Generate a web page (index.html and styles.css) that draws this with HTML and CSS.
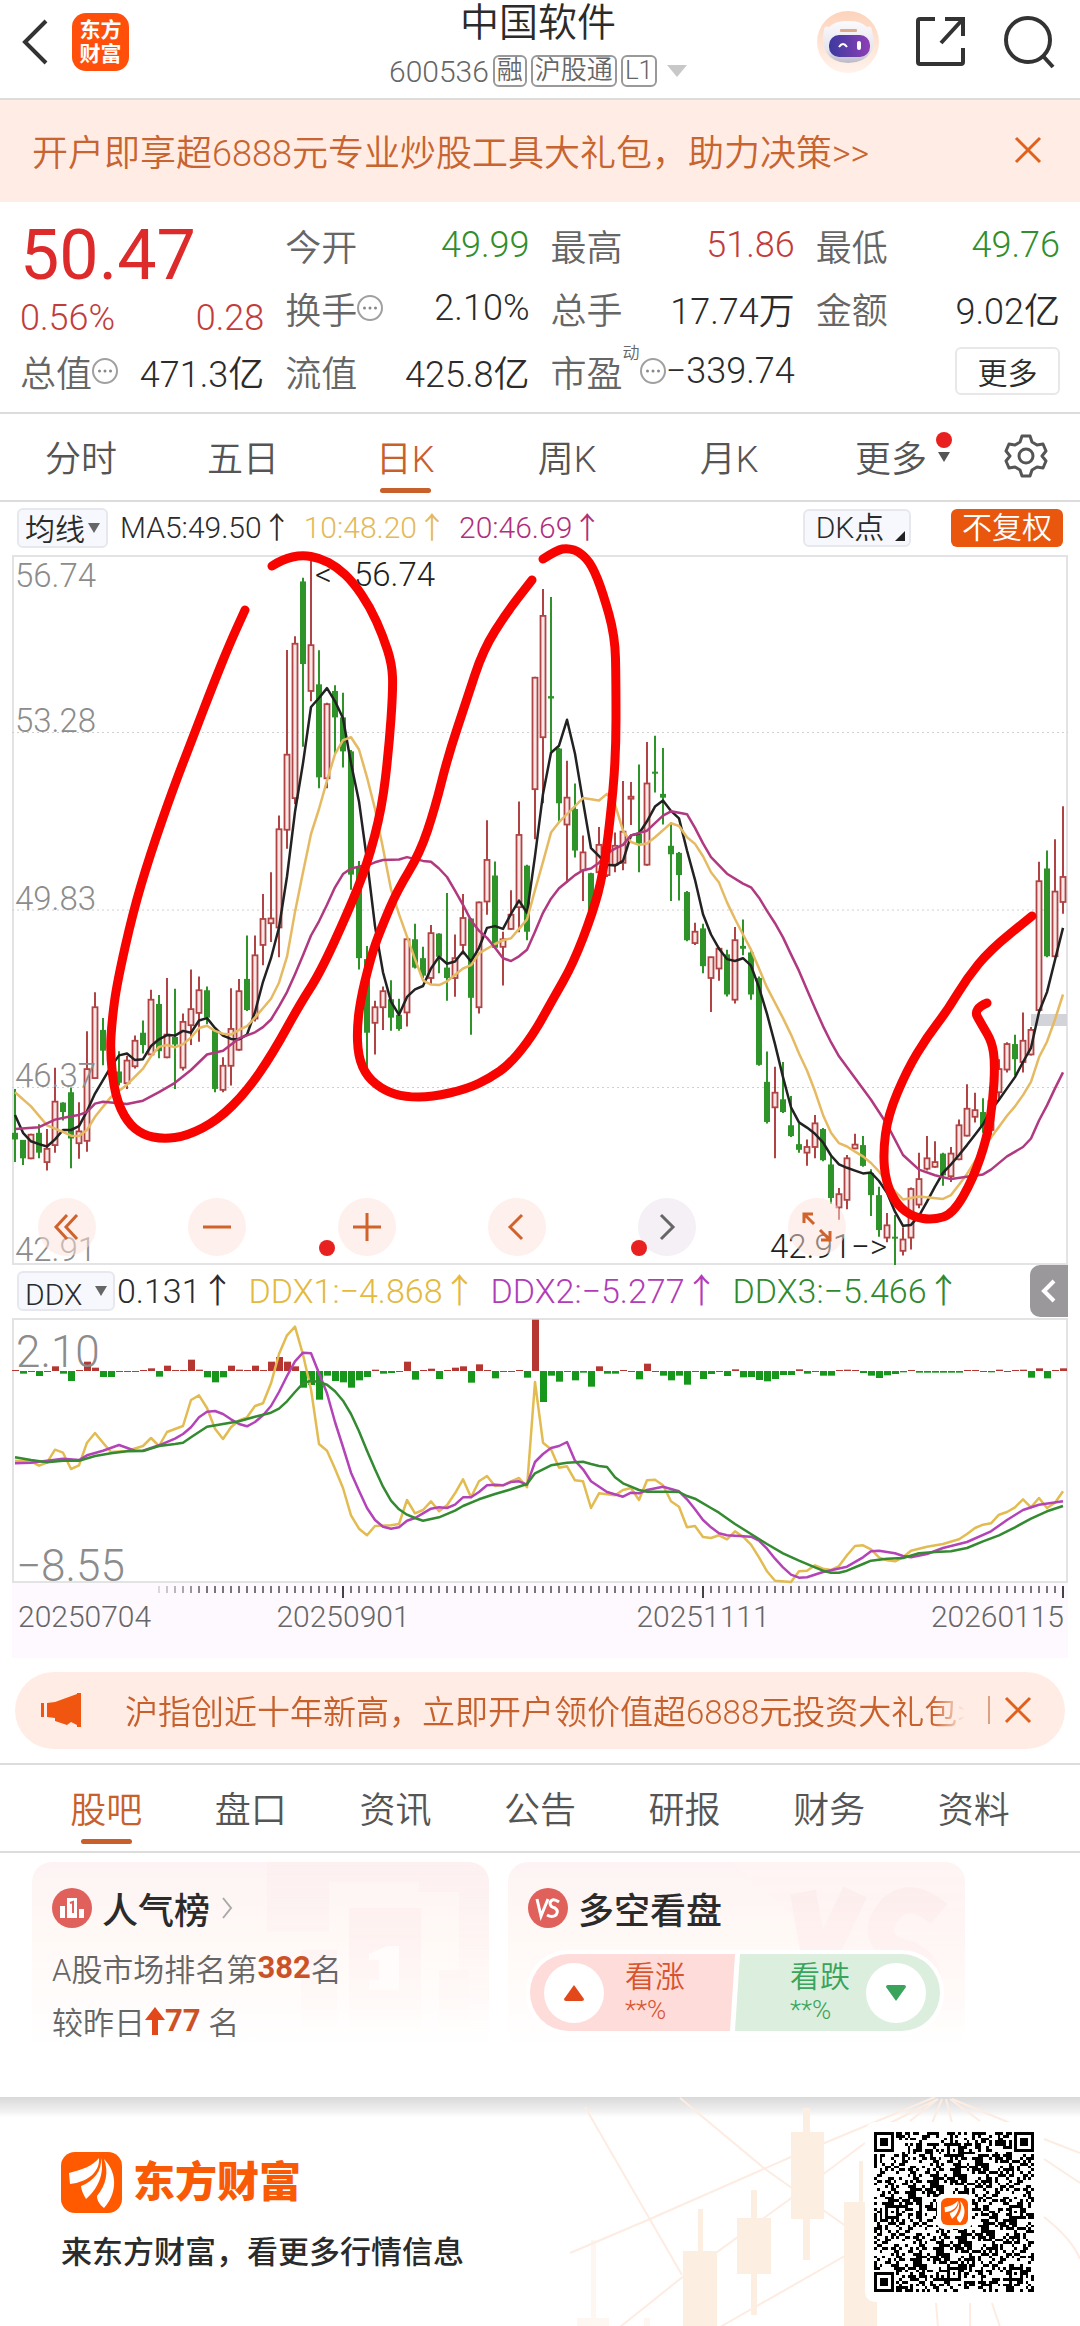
FILE: index.html
```html
<!DOCTYPE html>
<html lang="zh-CN">
<head>
    <meta charset="utf-8">
    <meta name="viewport" content="width=device-width, initial-scale=1">
    <title>中国软件 600536</title>
    <link rel="stylesheet" href="styles.css">
</head>
<body>
    <svg class="defs" width="0" height="0" aria-hidden="true">
        <symbol id="brand" viewBox="0 0 61 61">
            <rect width="61" height="61" rx="14" fill="#ff5a00"/>
            <path d="M8 21 C20 18 32 14 38 6 C39 20 27 30 9 32 Z" fill="#fff"/>
            <path d="M40 6 C44 22 36 38 25 47 C22 42 20 37 20 34 C33 29 41 19 40 6 Z" fill="#fff"/>
            <path d="M43 7 C58 22 55 43 43 56 C38 52 36 48 36 44 C45 33 48 20 43 7 Z" fill="#fff"/>
        </symbol>
        <symbol id="close" viewBox="0 0 28 28">
            <path d="M2 2 L26 26 M26 2 L2 26" fill="none" stroke="#e0601c" stroke-width="3"/>
        </symbol>
        <symbol id="dots" viewBox="0 0 26 26">
            <circle cx="13" cy="13" r="12" fill="none" stroke="#a0a0a0" stroke-width="2"/>
            <circle cx="7.500" cy="13" r="1.500" fill="#888"/>
            <circle cx="13" cy="13" r="1.500" fill="#888"/>
            <circle cx="18.500" cy="13" r="1.500" fill="#888"/>
        </symbol>
    </svg>

    <header class="topbar">
        <div class="topbar-side">
            <button class="icon-btn" aria-label="返回">
                <svg width="30" height="48" viewBox="0 0 30 48"><path d="M26 3 L5 24 L26 45" fill="none" stroke="#333" stroke-width="4"/></svg>
            </button>
            <a class="app-logo" href="#">东方<br>财富</a>
        </div>
        <div class="stock">
            <h1>中国软件</h1>
            <div class="stock-code">
                <span>600536</span>
                <span class="tag">融</span>
                <span class="tag">沪股通</span>
                <span class="tag">L1</span>
                <svg width="20" height="12" viewBox="0 0 20 12"><path d="M0 0 H20 L10 12 Z" fill="#c8c8c8"/></svg>
            </div>
        </div>
        <div class="topbar-side right">
            <button class="icon-btn" aria-label="智能助手">
                <svg width="64" height="64" viewBox="0 0 64 64">
                    <defs>
                        <linearGradient id="visor" x1="0" y1="0" x2="1" y2="0"><stop offset="0" stop-color="#3b3aa0"/><stop offset="1" stop-color="#8e3fb4"/></linearGradient>
                        <linearGradient id="halo" x1="0" y1="0" x2="0" y2="1"><stop offset="0" stop-color="#fdd3bb"/><stop offset="1" stop-color="#fff3ec"/></linearGradient>
                        <linearGradient id="shell" x1="0" y1="0" x2="0" y2="1"><stop offset="0" stop-color="#fbfafc"/><stop offset="0.700" stop-color="#e6e4ec"/><stop offset="1" stop-color="#b9b8c6"/></linearGradient>
                    </defs>
                    <circle cx="32" cy="32" r="31" fill="url(#halo)"/>
                    <path d="M8 20 Q8 15 13 17 Q20 10 32 11 Q44 10 51 17 Q56 15 56 21 Q60 34 55 42 Q48 53 32 53 Q17 53 10 42 Q5 32 8 20 Z" fill="url(#shell)"/>
                    <rect x="24" y="19" width="17" height="3" rx="1" fill="#dfa98c"/>
                    <rect x="13" y="25" width="41" height="22" rx="10" fill="url(#visor)"/>
                    <path d="M23 37 Q27 31 31 37" fill="none" stroke="#fff" stroke-width="2"/>
                    <rect x="41" y="31" width="4" height="9" rx="2" fill="#fff"/>
                </svg>
            </button>
            <button class="icon-btn" aria-label="分享">
                <svg width="52" height="52" viewBox="0 0 52 52" fill="none" stroke="#333" stroke-width="4"><path d="M20 3 H5 Q3 3 3 5 V46 Q3 48 5 48 H46 Q48 48 48 46 V32 M30 3 H48 V20 M48 3 L26 27"/></svg>
            </button>
            <button class="icon-btn" aria-label="搜索">
                <svg width="54" height="54" viewBox="0 0 54 54" fill="none" stroke="#333" stroke-width="4"><circle cx="26" cy="25" r="22"/><path d="M41 41 L51 52"/></svg>
            </button>
        </div>
    </header>

    <aside class="banner">
        <a href="#">开户即享超6888元专业炒股工具大礼包，助力决策&gt;&gt;</a>
        <button class="icon-btn" aria-label="关闭"><svg width="28" height="28"><use href="#close"/></svg></button>
    </aside>

    <section class="quote">
        <div class="price">
            <strong>50.47</strong>
            <div class="item up"><span>0.56%</span><span>0.28</span></div>
        </div>
        <div class="item"><span>今开</span><b class="down">49.99</b></div>
        <div class="item"><span>最高</span><b class="up">51.86</b></div>
        <div class="item"><span>最低</span><b class="down">49.76</b></div>
        <div class="item"><span>换手<svg width="26" height="26"><use href="#dots"/></svg></span><b>2.10%</b></div>
        <div class="item"><span>总手</span><b>17.74万</b></div>
        <div class="item"><span>金额</span><b>9.02亿</b></div>
        <div class="item"><span>总值<svg width="26" height="26"><use href="#dots"/></svg></span><b>471.3亿</b></div>
        <div class="item"><span>流值</span><b>425.8亿</b></div>
        <div class="item"><span>市盈<sup>动</sup><svg width="26" height="26"><use href="#dots"/></svg></span><b>−339.74</b></div>
        <div class="item end"><button class="more">更多</button></div>
    </section>

    <nav class="tabs period">
        <button>分时</button>
        <button>五日</button>
        <button class="active">日K</button>
        <button>周K</button>
        <button>月K</button>
        <button class="has-dot">更多<i class="dot"></i><i class="caret"></i></button>
        <button class="gear" aria-label="设置">
            <svg width="44" height="44" viewBox="0 0 44 44" fill="none" stroke="#555" stroke-width="3" stroke-linejoin="round">
                <path d="M18 2 H26 L28 8 L33 11 L39 10 L42 17 L38 22 L42 27 L39 34 L33 33 L28 36 L26 42 H18 L16 36 L11 33 L5 34 L2 27 L6 22 L2 17 L5 10 L11 11 L16 8 Z"/>
                <circle cx="22" cy="22" r="7"/>
            </svg>
        </button>
    </nav>

    <div class="ma-row">
        <span class="picker"><select aria-label="主图指标"><option>均线</option></select></span>
        <span>MA5:49.50↑</span>
        <span class="ma10">10:48.20↑</span>
        <span class="ma20">20:46.69↑</span>
        <button class="chip dk">DK点</button>
        <button class="chip adjust">不复权</button>
    </div>

    <div class="chart">
        <svg id="kline" viewBox="0 0 1056 710"></svg>
        <div class="chart-tools">
            <button aria-label="最左"><svg width="28" height="28" viewBox="0 0 28 28"><path d="M14 2 L3 14 L14 26 M24 2 L13 14 L24 26"/></svg></button>
            <button aria-label="缩小"><svg width="28" height="28" viewBox="0 0 28 28"><path d="M0 14 H28"/></svg></button>
            <button aria-label="放大"><svg width="28" height="28" viewBox="0 0 28 28"><path d="M0 14 H28 M14 0 V28"/></svg></button>
            <button aria-label="左移" class="has-dot"><i class="dot"></i><svg width="28" height="28" viewBox="0 0 28 28"><path d="M19 2 L7 14 L19 26"/></svg></button>
            <button aria-label="右移" class="has-dot muted"><i class="dot"></i><svg width="28" height="28" viewBox="0 0 28 28"><path d="M8 2 L20 14 L8 26"/></svg></button>
            <button aria-label="全屏"><svg width="30" height="30" viewBox="0 0 30 30"><path d="M2 11 V2 H11 M2 2 L12 12 M28 19 V28 H19 M28 28 L18 18"/></svg></button>
        </div>
    </div>

    <div class="ddx-row">
        <span class="picker"><select aria-label="副图指标"><option>DDX</option></select></span>
        <span>0.131↑</span>
        <span class="ddx1">DDX1:−4.868↑</span>
        <span class="ddx2">DDX2:−5.277↑</span>
        <span class="ddx3">DDX3:−5.466↑</span>
        <button class="fold" aria-label="展开"><svg width="18" height="26" viewBox="0 0 18 26"><path d="M14 3 L4 13 L14 23" fill="none" stroke="#fff" stroke-width="4"/></svg></button>
    </div>

    <div class="chart sub">
        <svg id="ddx" viewBox="0 0 1056 339"></svg>
    </div>

    <aside class="news">
        <svg width="40" height="34" viewBox="0 0 40 34" fill="#f0560f"><path d="M0 10 H3 V24 H0 Z M6 10 L14 9 L36 1 V0 H40 V34 H36 V32 L30 29 L26 32 L14 28 V25 L6 24 Z"/></svg>
        <a href="#">沪指创近十年新高，立即开户领价值超6888元投资大礼包&gt;</a>
        <button class="icon-btn" aria-label="关闭"><svg width="28" height="28"><use href="#close"/></svg></button>
    </aside>

    <nav class="tabs info">
        <button class="active">股吧</button>
        <button>盘口</button>
        <button>资讯</button>
        <button>公告</button>
        <button>研报</button>
        <button>财务</button>
        <button>资料</button>
    </nav>

    <section class="cards">
        <article class="card rank">
            <svg class="card-art" width="240" height="172" viewBox="0 0 240 172" fill="#fdeeee">
                <path d="M18 0 H240 V172 H210 V30 H170 V20 H80 V70 H18 Z" opacity="0.600"/>
                <path d="M100 46 H172 V172 H100 Z M52 88 H88 V172 H52 Z M190 108 H220 V172 H190 Z"/>
                <path d="M120 92 L138 84 H150 V128 H120 V118 H130 V98 H120 Z" fill="#fff"/>
            </svg>
            <h2>
                <svg width="40" height="40" viewBox="0 0 40 40"><circle cx="20" cy="20" r="20" fill="#e0605b"/><path d="M15 10 H25 V30 H15 Z M8 18 H13 V30 H8 Z M27 21 H32 V30 H27 Z" fill="#fff"/><path d="M18 15 L21 14 V25" fill="none" stroke="#e0605b" stroke-width="2"/></svg>
                人气榜
                <svg width="14" height="22" viewBox="0 0 14 22"><path d="M3 1 L11 11 L3 21" fill="none" stroke="#aaa" stroke-width="2"/></svg>
            </h2>
            <p>A股市场排名第<b>382</b>名</p>
            <p>较昨日<svg width="20" height="28" viewBox="0 0 20 28"><path d="M10 0 L20 13 H13 V28 H7 V13 H0 Z" fill="#e2481a"/></svg><b>77</b>&nbsp;名</p>
        </article>
        <article class="card">
            <svg class="card-art" width="240" height="172" viewBox="0 0 240 172" fill="none" stroke="#fdecec" stroke-width="26">
                <path d="M6 0 H240 V172 H210 Z" fill="#fef4f3" stroke="none"/>
                <path d="M78 30 L92 110 L130 30 M214 52 Q178 22 158 58 Q148 84 184 92 Q214 104 200 150"/>
            </svg>
            <h2>
                <svg width="40" height="40" viewBox="0 0 40 40"><circle cx="20" cy="20" r="20" fill="#e0605b"/><path d="M9 11 L13 28 L20 11 M31 14 Q24 9 22 15 Q22 19 27 20 Q31 23 28 27 Q24 30 19 27" fill="none" stroke="#fff" stroke-width="3"/></svg>
                多空看盘
            </h2>
            <div class="vote">
                <button class="vote-up">
                    <i><svg width="20" height="16" viewBox="0 0 20 16"><path d="M10 0 L20 14 Q20 16 18 16 H2 Q0 16 0 14 Z" fill="#e2481a"/></svg></i>
                    <span>看涨<small>**%</small></span>
                </button>
                <button class="vote-down">
                    <span>看跌<small>**%</small></span>
                    <i><svg width="20" height="16" viewBox="0 0 20 16"><path d="M10 16 L0 2 Q0 0 2 0 H18 Q20 0 20 2 Z" fill="#38a45c"/></svg></i>
                </button>
            </div>
        </article>
    </section>

    <footer class="promo">
        <svg class="promo-art" width="520" height="230" viewBox="0 0 520 230">
            <g fill="none" stroke="#fdece2" stroke-width="2">
                <path d="M10 156 L90 122 L231 60 L375 0 M120 1 L205 72 L290 132 M25 10 L122 178 M60 230 L120 182 L230 102 L305 46 M160 230 L290 156 M378 2 L330 26 M378 2 L350 24 M382 2 L372 26 M386 2 L392 26 M390 2 L420 24 M392 2 L450 26 M484 42 L520 56 M484 62 L520 86 M484 120 Q512 142 520 162 M376 206 L378 230 M410 206 V230 M432 206 L440 230"/>
            </g>
            <g fill="#fdeee2">
                <path d="M243 11 H250 V35 H264 V122 H250 V163 H243 V122 H231 V35 H243 Z"/>
                <path d="M191 93 H197 V121 H211 V177 H197 V218 H191 V177 H177 V121 H191 Z"/>
                <path d="M138 112 H143 V154 H157 V230 H123 V154 H138 Z"/>
                <path d="M299 64 H303 V105 H317 V230 H284 V105 H299 Z"/>
                <path d="M31 143 H36 V221 H49 V230 H17 V221 H31 Z M84 221 H90 V230 H84 Z" opacity="0.500"/>
            </g>
        </svg>
        <div class="promo-text">
            <div class="promo-name"><svg width="61" height="61"><use href="#brand"/></svg>东方财富</div>
            <p>来东方财富，看更多行情信息</p>
        </div>
        <div class="qr"><svg id="qr" viewBox="0 0 57 57" shape-rendering="crispEdges"></svg><svg class="qr-logo" width="27" height="27"><use href="#brand"/></svg></div>
    </footer>

    <script src="script.js"></script>
</body>
</html>
```
FILE: styles.css
```css
* {
    box-sizing: border-box;
}

body {
    margin: 0;
    background: #fff;
    color: #2b2b2b;
    font-family: Roboto, "Noto Sans CJK SC", sans-serif;
    font-weight: 350;
    font-size: 36px;
}

button, select {
    font: inherit;
    color: inherit;
    background: none;
    border: 0;
    padding: 0;
    margin: 0;
}

a {
    color: inherit;
    text-decoration: none;
}

svg {
    display: block;
    flex: none;
}

h1, h2, p {
    margin: 0;
}

.defs {
    position: absolute;
}

.icon-btn {
    display: flex;
}

/* header */
.topbar {
    display: flex;
    height: 100px;
    padding: 0 24px 0 20px;
    border-bottom: 2px solid #dcdcdc;
}

.topbar-side {
    flex: 1;
    display: flex;
    align-items: center;
    gap: 22px;
    padding-bottom: 14px;
}

.topbar-side.right {
    justify-content: flex-end;
    gap: 35px;
}

.app-logo {
    width: 57px;
    height: 58px;
    padding-top: 5px;
    border-radius: 14px;
    background: #ff4f0a;
    color: #fff;
    font-size: 21px;
    font-weight: 700;
    line-height: 24px;
    text-align: center;
}

.stock {
    display: flex;
    flex-direction: column;
    align-items: center;
}

.stock h1 {
    font-size: 39px;
    font-weight: 350;
    line-height: 46px;
}

.stock-code {
    display: flex;
    align-items: center;
    gap: 4px;
    height: 50px;
    color: #666;
    font-size: 30px;
}

.stock-code svg {
    margin-left: 6px;
}

.tag {
    height: 32px;
    padding: 0 2px;
    border: 2px solid #999;
    border-radius: 6px;
    font-size: 26px;
    line-height: 27px;
}

/* promotion */
.banner {
    display: flex;
    align-items: center;
    justify-content: space-between;
    height: 102px;
    padding: 0 38px 2px 32px;
    background: #ffede5;
    color: #c8642f;
}

/* quote */
.quote {
    display: grid;
    grid-template-columns: repeat(4, 1fr);
    grid-auto-rows: 63px;
    column-gap: 21px;
    padding: 11px 20px 10px;
    border-bottom: 2px solid #dcdcdc;
}

.price {
    grid-row: span 2;
}

.price strong {
    display: block;
    height: 84px;
    color: #dd2a2a;
    font-size: 70px;
    font-weight: 400;
    line-height: 84px;
}

.item {
    display: flex;
    align-items: center;
    justify-content: space-between;
    white-space: nowrap;
}

.item > span:first-child {
    display: flex;
    align-items: center;
    color: #666;
}

.item b {
    font-weight: 350;
}

.item sup {
    align-self: flex-start;
    font-size: 17px;
    line-height: 17px;
}

.item.end {
    justify-content: flex-end;
}

.item .up, .up.item, .item.up > span:first-child {
    color: #c23c3c;
}

.item .down {
    color: #2f8f2f;
}

.more {
    width: 105px;
    height: 48px;
    border: 2px solid #e8e8ea;
    border-radius: 6px;
    font-size: 30px;
}

/* tabs */
.tabs {
    display: flex;
    height: 88px;
    border-bottom: 2px solid #dcdcdc;
    color: #555;
}

.tabs button {
    flex: 1;
    position: relative;
    padding-bottom: 2px;
}

.tabs .gear {
    flex: 0 0 108px;
    display: flex;
    align-items: center;
    justify-content: center;
}

.tabs .active {
    color: #c8602c;
}

.tabs .active::after {
    content: "";
    position: absolute;
    left: calc(50% - 25px);
    bottom: 7px;
    width: 51px;
    height: 5px;
    border-radius: 3px;
    background: #c8602c;
}

.dot {
    position: absolute;
    width: 16px;
    height: 16px;
    border-radius: 50%;
    background: #e82020;
}

.period .dot {
    right: 20px;
    top: 18px;
}

.period .caret {
    position: absolute;
    right: 22px;
    top: 38px;
    border: 6px solid transparent;
    border-top: 10px solid #555;
    border-bottom: 0;
}

/* indicator rows */
.ma-row, .ddx-row {
    display: flex;
    align-items: center;
    margin: 0 12px;
    white-space: nowrap;
}

.ma-row {
    gap: 12px;
    height: 53px;
    padding: 0 5px 2px;
    font-size: 30px;
    line-height: 40px;
}

.picker {
    position: relative;
    display: flex;
}

.picker::after {
    content: "";
    position: absolute;
    right: 8px;
    top: 15px;
    border: 6px solid transparent;
    border-top: 10px solid #666;
    border-bottom: 0;
}

.picker select {
    appearance: none;
    width: 91px;
    height: 40px;
    padding-left: 6px;
    border: 2px solid #e6e8ee;
    border-radius: 6px;
    background: #f6f8fd;
    font-size: 30px;
}

.ma10 {
    color: #e3b95a;
}

.ma20 {
    color: #b0307e;
}

.chip {
    height: 38px;
    border-radius: 6px;
    font-size: 30px;
    line-height: 34px;
}

.dk {
    position: relative;
    width: 108px;
    margin-left: auto;
    padding-right: 14px;
    border: 2px solid #e6e8ee;
    background: #f6f8fd;
}

.dk::after {
    content: "";
    position: absolute;
    right: 4px;
    bottom: 4px;
    border-left: 10px solid transparent;
    border-bottom: 10px solid #222;
}

.adjust {
    width: 112px;
    margin-left: 28px;
    background: #e9570f;
    color: #fff;
}

.ddx-row {
    gap: 14px;
    height: 54px;
    padding: 0 0 2px 5px;
    font-size: 34px;
    line-height: 44px;
}

.ddx-row .picker {
    margin-right: -12px;
}

.ddx-row select {
    width: 98px;
}

.ddx1 {
    color: #e3b940;
}

.ddx2 {
    color: #b03cb8;
}

.ddx3 {
    color: #2f8a2f;
}

.fold {
    display: flex;
    align-items: center;
    justify-content: center;
    width: 38px;
    height: 52px;
    margin-left: auto;
    border-radius: 10px 0 0 10px;
    background: #9b989c;
}

/* charts */
.chart {
    position: relative;
    margin: 0 12px;
}

.chart > svg {
    width: 100%;
    height: auto;
    overflow: visible;
}

.chart.sub {
    background: linear-gradient(#fff 264px, #fdf9fe 264px);
}

.chart-tools {
    position: absolute;
    left: 26px;
    bottom: 9px;
    display: flex;
    gap: 92px;
}

.chart-tools button {
    position: relative;
    display: flex;
    align-items: center;
    justify-content: center;
    width: 58px;
    height: 58px;
    border-radius: 50%;
    background: rgba(253, 226, 217, 0.5);
}

.chart-tools .muted {
    background: #f4f0f6;
}

.chart-tools path {
    fill: none;
    stroke: #d0622c;
    stroke-width: 3;
}

.chart-tools .muted path {
    stroke: #666;
}

.chart-tools .dot {
    left: -7px;
    bottom: 0;
}

.chart-tools .has-dot:not(.muted) .dot {
    left: -169px;
}

.grid {
    stroke: #d0d0d0;
    stroke-dasharray: 2 3;
}

.frame {
    fill: none;
    stroke: #e3e3e5;
    stroke-width: 2;
}

.axis {
    fill: #8c8c8c;
    font-size: 33px;
}

.axis.big {
    font-size: 44px;
}

.mark {
    fill: #222;
    font-size: 33px;
}

.date {
    fill: #666;
    font-size: 30px;
}

.line {
    fill: none;
    stroke-width: 2.5;
    stroke-linejoin: round;
}

.ring {
    fill: none;
    stroke: #f80400;
    stroke-width: 9;
    stroke-linecap: round;
    stroke-linejoin: round;
}

/* news strip */
.news {
    display: flex;
    align-items: center;
    gap: 24px;
    height: 77px;
    margin: 14px 15px;
    padding: 0 33px 2px 26px;
    border-radius: 39px;
    background: #ffede5;
    color: #c8602c;
    font-size: 33px;
}

.news a {
    flex: 1;
    margin-left: 20px;
    overflow: hidden;
    white-space: nowrap;
    -webkit-mask-image: linear-gradient(to right, #000 95%, transparent 99%);
    mask-image: linear-gradient(to right, #000 95%, transparent 99%);
}

.news .icon-btn {
    padding-left: 14px;
    margin-left: -10px;
    border-left: 2px solid #dba183;
}

.info {
    height: 90px;
    padding: 0 34px;
    border-top: 2px solid #dcdcdc;
}

/* cards */
.cards {
    display: grid;
    grid-template-columns: 457px 457px;
    gap: 19px;
    height: 244px;
    padding: 9px 32px 0;
}

.card {
    position: relative;
    height: 184px;
    padding: 26px 20px 0;
    border-radius: 20px 20px 0 0;
    background: linear-gradient(#fdf3f4, #fff9f6 40%, #fff);
}

.card-art {
    position: absolute;
    right: 0;
    top: 0;
    border-radius: 0 20px 0 0;
    -webkit-mask-image: linear-gradient(#000, transparent);
    mask-image: linear-gradient(#000, transparent);
}

.card h2 {
    position: relative;
    display: flex;
    align-items: center;
    gap: 10px;
    height: 40px;
    font-size: 36px;
    font-weight: 500;
}

.card p {
    position: relative;
    display: flex;
    align-items: center;
    height: 53px;
    color: #666;
    font-size: 31px;
}

.card h2 + p {
    margin-top: 13px;
}

.card b {
    color: #cc5226;
    font-weight: 700;
}

.vote {
    position: relative;
    display: flex;
    height: 77px;
    margin: 26px 5px 0 2px;
    border-radius: 39px;
    background: #fff;
    overflow: hidden;
    outline: 4px solid #fff;
}

.vote button {
    flex: 1;
    display: flex;
    align-items: center;
    gap: 21px;
    padding: 0 14px;
    text-align: left;
    font-size: 30px;
    line-height: 34px;
}

.vote i {
    display: flex;
    align-items: center;
    justify-content: center;
    width: 60px;
    height: 60px;
    border-radius: 50%;
    background: #fff;
}

.vote small {
    display: block;
    font-size: 26px;
    line-height: 32px;
}

.vote-up {
    background: #fedcd9;
    color: #d9532c;
    clip-path: polygon(0 0, 100% 0, calc(100% - 5px) 100%, 0 100%);
}

.vote-down {
    justify-content: flex-end;
    background: #dceedd;
    color: #38a45c;
    clip-path: polygon(5px 0, 100% 0, 100% 100%, 0 100%);
}

.vote .vote-down {
    gap: 16px;
}

/* footer */
.promo {
    position: relative;
    display: flex;
    align-items: center;
    justify-content: space-between;
    height: 230px;
    padding: 0 37px 0 61px;
    background: linear-gradient(#d9d9d9, #f0f0f0 14px, #fff 20px);
}

.promo-art {
    position: absolute;
    right: 0;
    top: 0;
}

.promo-text {
    font-size: 31px;
    font-weight: 500;
}

.promo-name {
    display: flex;
    align-items: center;
    gap: 11px;
    margin-bottom: 14px;
    color: #f95a05;
    font-size: 42px;
    font-weight: 900;
    line-height: 61px;
}

.qr {
    position: relative;
    width: 178px;
    height: 180px;
    padding: 10px 9px;
    border-radius: 10px;
    background: #fff;
}

.qr-logo {
    position: absolute;
    left: 76px;
    top: 76px;
    border: 4px solid #fff;
    border-radius: 6px;
    background: #fff;
    box-sizing: content-box;
    margin: -4px;
}
```
FILE: script.js
```js
var NS = "http://www.w3.org/2000/svg";
var RED = "#b04444";
var GREEN = "#2e9328";
var STEP = 8;

function add(parent, name, attrs, text) {
    var el = document.createElementNS(NS, name);
    for (var key in attrs) {
        el.setAttribute(key, attrs[key]);
    }
    if (text) {
        el.textContent = text;
    }
    parent.appendChild(el);
    return el;
}

function xOf(i) {
    return 3 + i * STEP;
}

// values are stored as a flat list: index, value, index, value...
function drawLine(svg, list, toY, color) {
    var pts = [];
    for (var i = 0; i < list.length; i += 2) {
        pts.push(xOf(list[i]) + "," + toY(list[i + 1]).toFixed(1));
    }
    add(svg, "polyline", { points: pts.join(" "), "class": "line", stroke: color });
}

// closed strokes drawn by hand, smoothed through the midpoints
function drawRing(svg, p) {
    var d = "M" + p[0] + " " + p[1];
    for (var i = 2; i < p.length - 2; i += 2) {
        d += " Q" + p[i] + " " + p[i + 1] + " " + (p[i] + p[i + 2]) / 2 + " " + (p[i + 1] + p[i + 3]) / 2;
    }
    d += " L" + p[p.length - 2] + " " + p[p.length - 1];
    add(svg, "path", { d: d, "class": "ring" });
}

/* ---------- daily candles ---------- */

// type, high, body top, body bottom, low
var candles = [
    "g",1165,1258,1272,1320, "g",1273,1273,1312,1326, "r",1260,1262,1312,1314, "g",1240,1258,1300,1312,
    "r",1250,1292,1320,1338, "r",1120,1192,1284,1300, "g",1193,1194,1214,1232, "g",1162,1172,1270,1333,
    "r",1193,1255,1280,1313, "r",1043,1123,1275,1298, "r",960,992,1142,1143, "g",1015,1040,1084,1115,
    "g",1085,1100,1130,1150, "g",1085,1128,1152,1158, "r",1095,1105,1153,1165, "r",1052,1063,1117,1122,
    "g",1020,1046,1072,1090, "r",955,976,1092,1092, "g",966,985,1085,1100, "r",930,1050,1098,1100,
    "g",953,1055,1071,1165, "r",1005,1023,1120,1126, "r",912,996,1030,1072, "r",927,956,1004,1065,
    "g",948,956,1014,1028, "g",1040,1040,1165,1172, "r",1098,1116,1167,1172, "r",952,1038,1116,1158,
    "r",932,958,1082,1084, "g",840,932,998,1000, "r",840,882,1016,1022, "r",752,805,860,903,
    "r",706,804,814,854, "r",586,615,823,886, "r",235,457,616,656, "r",206,222,549,562,
    "g",82,90,265,440, "r",40,225,322,344, "g",236,308,505,528, "r",347,350,507,528,
    "g",310,322,378,456, "g",326,378,450,484, "g",447,450,711,743, "g",682,695,888,912,
    "g",862,890,1046,1125, "r",978,992,1025,1092, "r",948,958,992,1040, "g",935,975,1014,1042,
    "g",974,1008,1038,1042, "r",842,848,1003,1033, "g",815,848,908,910, "g",864,888,925,930,
    "r",818,835,930,945, "g",835,836,885,920, "g",750,908,930,978, "r",838,888,930,970,
    "r",752,803,860,880, "g",803,804,972,1050, "r",768,770,992,1005, "r",596,680,768,796,
    "g",683,713,866,868, "r",832,848,864,946, "r",744,796,826,828, "r",556,627,780,833,
    "g",690,692,832,850, "r",292,294,530,636, "r",106,163,420,560, "g",123,333,338,450,
    "g",443,444,560,600, "r",470,548,605,728, "g",518,572,660,675, "r",628,664,702,767,
    "g",707,708,790,792, "r",610,648,706,740, "r",640,650,712,716, "r",622,650,690,706,
    "r",513,620,686,702, "r",515,546,550,606, "g",478,625,645,706, "r",430,518,690,692,
    "g",417,493,497,537, "g",443,540,548,605, "g",600,650,668,767, "g",663,665,712,766,
    "g",746,748,850,852, "r",813,832,856,860, "g",815,825,905,920, "r",885,886,930,1002,
    "r",865,868,910,936, "g",870,880,965,969, "r",822,850,976,984, "g",806,862,868,882,
    "g",870,876,965,976, "g",927,930,1114,1116, "g",1086,1150,1235,1238, "r",1118,1173,1204,1312,
    "g",1108,1187,1214,1216, "g",1180,1242,1265,1267, "g",1238,1282,1294,1300, "r",1272,1288,1300,1328,
    "r",1220,1238,1288,1312, "g",1248,1250,1316,1318, "g",1305,1325,1396,1408, "r",1375,1388,1416,1442,
    "r",1305,1312,1400,1420, "r",1260,1283,1291,1293, "g",1265,1284,1328,1330, "g",1335,1343,1390,1434,
    "g",1372,1390,1464,1478, "r",1428,1454,1480,1490, "g",1432,1478,1482,1538, "r",1458,1484,1508,1518,
    "r",1374,1377,1480,1505, "r",1300,1356,1410,1418, "r",1265,1312,1334,1338, "r",1276,1320,1330,1332,
    "g",1300,1302,1348,1370, "r",1288,1302,1350,1362, "r",1230,1242,1314,1316, "r",1155,1207,1264,1266,
    "r",1173,1210,1224,1236, "g",1185,1214,1245,1258, "r",1170,1190,1252,1270, "r",1102,1123,1172,1190,
    "r",1066,1070,1124,1130, "g",1050,1070,1102,1136, "r",1003,1063,1108,1130, "r",1034,1040,1092,1094,
    "r",684,725,998,1000, "g",660,698,884,886, "r",636,747,884,886, "r",566,716,769,794
];

var ma5 = [0,1220,1,1258,2,1276,3,1282,4,1287,5,1272,6,1252,7,1252,8,1244,9,1212,10,1175,12,1118,13,1094,14,1090,15,1104,16,1102,17,1074,18,1060,19,1051,20,1052,21,1042,22,1046,23,1020,24,1015,25,1036,26,1052,27,1059,28,1060,29,1050,30,1002,31,938,32,888,33,823,34,715,35,578,36,475,37,356,38,337,39,316,40,344,41,380,42,475,43,556,44,680,45,820,46,918,47,980,48,1008,49,970,50,954,51,947,52,910,53,885,54,900,55,895,56,874,57,895,58,866,59,824,60,820,61,826,62,794,63,766,64,792,65,672,66,540,67,453,68,438,69,383,70,455,71,556,72,655,73,672,74,690,75,692,76,682,77,628,78,624,79,598,80,567,81,554,82,576,83,592,84,660,85,722,86,795,87,838,88,868,89,890,90,894,91,888,92,904,93,950,94,1006,95,1070,96,1140,97,1204,98,1236,99,1247,100,1260,101,1278,102,1306,103,1325,104,1332,105,1338,106,1344,107,1342,108,1360,109,1385,110,1425,111,1455,112,1453,113,1434,114,1404,115,1372,116,1343,117,1325,118,1305,119,1284,120,1262,121,1240,122,1210,123,1188,124,1164,125,1140,126,1108,127,1078,128,1002,129,960,130,892,131,824];
var ma10 = [0,1172,2,1202,4,1242,6,1256,7,1264,8,1265,9,1252,10,1224,12,1182,14,1156,16,1122,17,1096,18,1076,19,1072,20,1077,21,1070,22,1056,23,1036,24,1031,25,1042,26,1048,27,1050,28,1040,29,1032,30,1014,32,974,33,940,34,885,35,790,36,706,37,625,38,572,39,512,40,456,41,426,42,420,43,446,44,505,45,572,46,655,47,742,48,795,50,890,51,935,52,944,53,945,54,937,56,910,57,903,58,878,60,858,61,850,62,846,63,826,64,806,65,744,66,684,67,622,68,600,70,566,71,549,73,554,74,540,75,562,76,618,77,642,78,648,79,645,80,632,82,602,83,608,84,632,85,646,86,672,87,706,88,728,89,770,90,805,91,838,92,870,93,910,94,950,96,1015,97,1050,98,1090,99,1126,100,1170,101,1220,102,1258,103,1280,104,1287,105,1298,106,1308,107,1322,108,1340,109,1362,110,1382,111,1399,113,1393,116,1398,117,1390,118,1368,119,1345,120,1318,121,1290,122,1268,123,1245,124,1222,125,1202,126,1178,127,1150,128,1098,129,1065,130,1018,131,965];
var ma20 = [0,1250,3,1246,5,1230,7,1223,8,1220,9,1214,10,1196,11,1192,14,1197,16,1190,18,1172,20,1152,22,1125,24,1092,26,1084,28,1058,30,1045,31,1034,32,1018,33,990,34,960,35,922,36,882,37,840,38,810,39,775,40,738,41,710,42,698,43,694,44,692,45,685,46,680,48,679,49,674,51,682,52,684,53,698,54,716,55,745,56,775,57,808,58,830,59,845,60,866,61,888,62,894,63,884,64,870,65,832,66,792,67,762,68,740,69,726,70,712,71,702,72,698,73,686,74,666,75,656,76,648,77,628,79,618,80,602,81,586,82,577,84,583,85,612,86,645,87,674,89,709,91,730,92,738,93,760,94,788,95,814,96,844,97,880,98,915,99,955,100,994,101,1032,102,1066,103,1096,105,1142,107,1188,109,1240,111,1305,113,1336,115,1348,117,1356,119,1351,121,1346,122,1336,124,1308,126,1288,127,1270,128,1232,129,1200,130,1164,131,1130];

var rings = [
    [260,11,271,4,290,0,308,3,325,12,341,27,358,52,371,81,380,109,381,135,377,192,370,253,355,310,336,357,308,418,288,449,261,498,235,536,206,565,175,581,151,584,131,580,115,567,103,541,98,498,100,465,105,428,121,357,138,300,161,234,181,182,201,130,218,88,233,55],
    [531,4,545,-5,556,-7,568,-3,580,10,591,38,603,81,604,126,604,201,598,267,591,319,581,357,561,409,541,444,521,480,498,509,478,523,455,534,420,542,393,542,373,536,355,522,346,501,345,470,350,437,361,395,371,369,385,336,408,298,423,253,436,201,455,144,471,95,495,57,520,25],
    [975,448,961,454,970,470,980,487,983,508,981,546,975,583,961,624,941,659,921,665,901,662,885,650,874,628,871,598,876,560,895,515,915,482,935,456,955,423,978,395,1020,361]
];

function drawKline() {
    var svg = document.getElementById("kline");
    function toY(v) {
        return (v - 34) * 710 / 1504;
    }

    add(svg, "rect", { x: 1, y: 1, width: 1054, height: 708, "class": "frame" });
    for (var g = 1; g < 4; g++) {
        add(svg, "line", { x1: 0, x2: 1056, y1: g * 177.5, y2: g * 177.5, "class": "grid" });
    }
    add(svg, "rect", { x: 1019, y: 459, width: 36, height: 12, fill: "#d3d3da" });

    for (var i = 0; i * 5 < candles.length; i++) {
        var c = candles.slice(i * 5, i * 5 + 5);
        var hollow = c[0] == "r";
        var color = hollow ? RED : GREEN;
        var top = toY(c[2]);
        var height = Math.max(toY(c[3]) - top, 2);
        add(svg, "line", { x1: xOf(i), x2: xOf(i), y1: toY(c[1]), y2: toY(c[4]), stroke: color, "stroke-width": 2 });
        add(svg, "rect", {
            x: xOf(i) - (hollow ? 2.5 : 3), y: top, width: hollow ? 5 : 6, height: height,
            fill: hollow ? "#fbe6e6" : color, stroke: color, "stroke-width": hollow ? 1.8 : 0
        });
    }

    drawLine(svg, ma5, toY, "#222");
    drawLine(svg, ma10, toY, "#e6ba62");
    drawLine(svg, ma20, toY, "#b0397f");

    add(svg, "text", { x: 3, y: 32, "class": "axis" }, "56.74");
    add(svg, "text", { x: 3, y: 177, "class": "axis" }, "53.28");
    add(svg, "text", { x: 3, y: 355, "class": "axis" }, "49.83");
    add(svg, "text", { x: 3, y: 532, "class": "axis" }, "46.37");
    add(svg, "text", { x: 3, y: 706, "class": "axis" }, "42.91");
    add(svg, "text", { x: 303, y: 31, "class": "mark" }, "<");
    add(svg, "text", { x: 342, y: 31, "class": "mark" }, "56.74");
    add(svg, "text", { x: 758, y: 703, "class": "mark" }, "42.91−>");

    for (var r = 0; r < rings.length; r++) {
        drawRing(svg, rings[r]);
    }
}

/* ---------- DDX ---------- */

var ddxBars = [1,-8,-2,-15,-2,14,-8,-30,1,28,10,-18,-18,-2,-2,-2,1,8,-17,16,1,1,34,4,-19,-34,-19,16,4,1,16,1,28,42,28,14,-50,-42,-86,-14,-30,-34,-50,-28,-18,4,-8,-6,-3,28,-26,1,7,-24,1,10,14,-35,20,1,-22,-2,-2,1,-20,154,-93,-14,-32,-2,-28,-5,-47,14,-8,-8,1,-2,-25,22,-3,-14,-28,-14,-41,-2,-24,-9,-2,-15,5,-19,-18,-27,-31,-24,-12,-12,5,-8,-2,-14,-14,2,4,2,-6,-14,-21,-13,-9,-4,1,-5,-5,-5,-5,-5,-5,1,1,-2,-4,4,-2,1,4,-20,8,-22,1,8];

var ddx1 = [0,606,2,608,3,621,4,612,5,573,6,582,7,631,8,620,9,552,10,523,11,552,12,580,14,577,16,562,17,538,18,562,19,520,21,502,22,424,23,410,24,448,25,510,26,541,27,506,28,485,29,476,30,442,31,434,32,374,33,286,34,230,35,204,36,288,37,392,38,556,39,576,40,630,41,688,42,770,43,810,44,830,45,802,47,800,48,796,49,724,50,764,51,754,52,728,53,758,54,740,55,704,56,662,57,716,58,668,59,652,60,682,61,680,62,668,63,658,64,686,65,370,66,552,67,572,68,627,69,623,70,665,71,668,72,748,73,704,75,710,76,694,77,688,78,724,79,665,80,663,81,680,82,728,83,744,84,806,85,802,86,835,87,838,88,830,89,842,90,818,91,834,92,858,93,896,94,938,95,966,97,970,98,938,99,936,100,920,101,930,102,934,103,922,104,890,105,862,106,860,107,872,108,896,109,905,110,908,111,896,112,876,114,864,116,856,118,842,119,826,120,808,121,798,122,794,123,768,124,760,125,746,126,722,127,746,128,718,129,748,130,732,131,698];
var ddx2 = [0,614,2,612,4,606,6,600,8,604,9,590,11,576,13,559,15,576,16,576,18,560,20,540,21,526,22,506,23,476,24,459,25,457,26,466,27,482,28,496,29,503,30,490,31,470,32,442,33,400,34,352,35,308,36,282,37,284,38,344,39,404,40,490,41,565,42,642,43,696,44,748,45,784,46,804,47,810,48,806,49,786,50,778,51,764,52,750,53,746,54,748,55,738,56,716,57,716,58,700,59,680,60,678,61,680,62,670,63,668,64,678,65,610,66,586,67,568,68,562,69,550,70,606,71,632,72,668,74,700,76,714,77,702,78,704,79,694,81,684,83,698,84,722,85,752,86,784,87,806,88,824,89,830,92,834,93,846,94,870,95,900,96,926,97,948,98,957,99,956,101,940,104,924,106,896,107,878,108,876,110,884,111,892,112,896,114,886,116,868,119,850,122,818,124,784,126,754,128,738,131,728];
var ddx3 = [0,596,2,604,4,611,6,606,8,606,10,592,12,584,14,578,16,577,18,562,20,556,21,552,22,536,24,504,26,496,28,488,30,474,32,462,33,450,34,428,35,400,36,374,37,366,38,370,39,378,40,398,41,426,42,466,43,518,44,576,45,632,46,684,47,726,48,752,49,768,50,778,51,786,53,776,55,756,56,742,58,722,60,706,62,692,64,676,65,644,67,620,69,612,71,609,72,616,73,622,74,625,75,656,76,674,77,684,78,694,79,699,82,699,83,700,84,712,85,720,87,748,88,762,90,796,92,826,94,856,96,884,98,906,100,926,101,936,102,942,103,942,104,936,106,916,107,906,109,900,111,898,113,884,115,880,117,878,119,868,121,848,123,830,125,806,127,780,129,758,131,742];

function drawDdx() {
    var svg = document.getElementById("ddx");
    function toY(v) {
        return (v - 181) / 3;
    }

    add(svg, "rect", { x: 1, y: 0, width: 1054, height: 263, "class": "frame" });
    for (var i = 0; i < ddxBars.length; i++) {
        var h = Math.max(Math.abs(ddxBars[i]) / 3, 1);
        var up = ddxBars[i] > 0;
        add(svg, "rect", { x: xOf(i) - 3, y: up ? 52 - h : 52, width: 7, height: h, fill: up ? "#b63632" : "#16961a" });
    }
    drawLine(svg, ddx1, toY, "#e2bc50");
    drawLine(svg, ddx2, toY, "#b443b8");
    drawLine(svg, ddx3, toY, "#338a30");

    add(svg, "text", { x: 4, y: 48, "class": "axis big" }, "2.10");
    add(svg, "text", { x: 4, y: 262, "class": "axis big" }, "−8.55");

    for (var t = 18; t < 132; t++) {
        var major = t == 41 || t == 86 || t == 131;
        add(svg, "line", {
            x1: xOf(t), x2: xOf(t), y1: 267, y2: major ? 279 : 274,
            stroke: major ? "#444" : "#777", "stroke-width": 2, opacity: Math.min((t - 16) / 8, 1)
        });
    }
    add(svg, "text", { x: 6, y: 308, "class": "date" }, "20250704");
    add(svg, "text", { x: xOf(41), y: 308, "class": "date", "text-anchor": "middle" }, "20250901");
    add(svg, "text", { x: xOf(86), y: 308, "class": "date", "text-anchor": "middle" }, "20251111");
    add(svg, "text", { x: 1052, y: 308, "class": "date", "text-anchor": "end" }, "20260115");
}

/* ---------- QR code ---------- */

function drawQr() {
    var svg = document.getElementById("qr");
    var n = 57;
    var seed = 600536;
    var d = "";

    // square marks: centre x, centre y, radius
    var marks = [[3, 3, 3], [53, 3, 3], [3, 53, 3], [28, 6, 2], [6, 28, 2], [50, 28, 2], [28, 50, 2], [50, 50, 2]];

    function cell(x, y) {
        for (var m = 0; m < marks.length; m++) {
            var dist = Math.max(Math.abs(x - marks[m][0]), Math.abs(y - marks[m][1]));
            if (marks[m][2] == 3 && dist <= 4) {
                return dist == 3 || dist < 2;
            }
            if (marks[m][2] == 2 && dist <= 2) {
                return dist != 1;
            }
        }
        seed = (seed * 1103515245 + 12345) % 2147483648;
        return seed / 2147483648 < 0.5;
    }

    for (var y = 0; y < n; y++) {
        for (var x = 0; x < n; x++) {
            if (cell(x, y)) {
                d += "M" + x + " " + y + "h1v1h-1z";
            }
        }
    }
    add(svg, "path", { d: d, fill: "#000" });
}

drawKline();
drawDdx();
drawQr();
```
